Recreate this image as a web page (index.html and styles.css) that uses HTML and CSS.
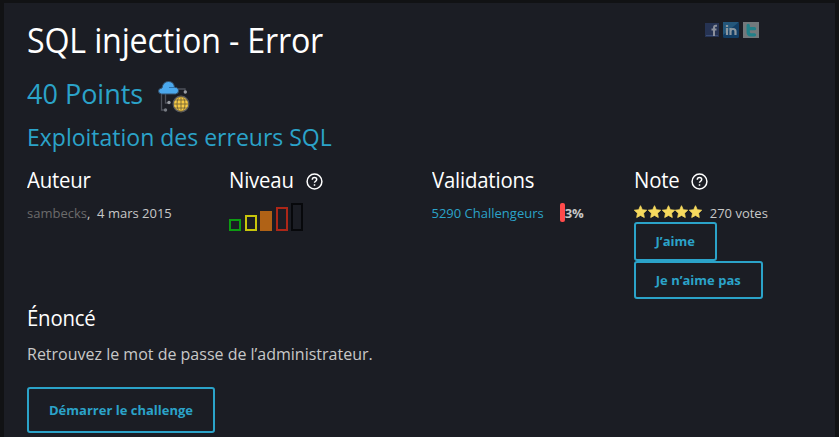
FILE: index.html
```
<!DOCTYPE html>
<html lang="fr">
<head>
<meta charset="utf-8">
<title>SQL injection - Error</title>
<link rel="stylesheet" href="styles.css">
</head>
<body>
<main class="tile">
  <header class="top">
    <h1><span class="narrow narrow-title">SQL injection - Error</span></h1>
    <div class="social">
      <svg width="14" height="14" viewBox="0 0 14 14"><rect width="14" height="14" fill="#263353"/><path d="M1 12.5h12" stroke="#3b4d75"/><path d="M12 2.800h-1.200Q9 2.800 9 5v8M6.500 6.500h5" fill="none" stroke="#8c909b" stroke-width="2"/></svg>
      <svg width="16" height="16" viewBox="0 0 16 16"><rect width="16" height="16" rx="1.500" fill="#123e65"/><path d="M0 0h16L0 13z" fill="#24577b"/><path d="M4 6v7M4 3v2M7.500 13V6M7.500 9.500q0-2.500 2.500-2.500t2.500 2.500V13" fill="none" stroke="#8b979f" stroke-width="2.200"/></svg>
      <svg width="16" height="16" viewBox="0 0 16 16"><rect width="16" height="16" fill="#72797c"/><path d="M5.200 3.500v6.500q0 2.800 2.500 2.800H11.500M5.200 6.700h6.300" fill="none" stroke="#218089" stroke-width="3.300" stroke-linecap="round"/></svg>
    </div>
  </header>
  <h2 class="points">40 Points
    <svg class="category" width="34" height="34" viewBox="0 0 34 34">
      <path d="M4.500 14v16h3M8.500 14v9h3M20 9h8v2" fill="none" stroke="#4d5059" stroke-width="1.300"/>
      <circle cx="8.500" cy="30" r="1.700" fill="#777b83"/><circle cx="12" cy="22.500" r="1.700" fill="#999ca2"/><circle cx="28.300" cy="12" r="1.700" fill="#999ca2"/>
      <path d="M4.500 14q-3-.5-3-3 0-2.500 3.500-3Q6 1.500 11.500 1.500q5.500 0 6 6 4-.5 4 3.500 0 2.500-3 3z" fill="#4ba8ed" stroke="#36526e"/>
      <path d="M12 7.500h6" stroke="#2c70aa"/>
      <circle cx="24" cy="24" r="7.800" fill="#f6c945" stroke="#555861" stroke-width="1.300"/>
      <path d="M24 16v16M16 24h16M17.500 20h13M17.500 28h13" stroke="#6b5d35" stroke-width=".8"/><ellipse cx="24" cy="24" rx="4" ry="7.800" fill="none" stroke="#6b5d35" stroke-width=".8"/>
    </svg>
  </h2>
  <h3 class="subtitle">Exploitation des erreurs SQL</h3>
  <section class="facts">
    <div class="fact">
      <h4><span class="narrow">Auteur</span></h4>
      <p class="detail"><span class="author">sambecks</span>,&nbsp; 4 mars 2015</p>
    </div>
    <div class="fact">
      <h4><span class="narrow">Niveau</span>
        <svg class="help" width="17" height="17" viewBox="0 0 17 17"><circle cx="8.500" cy="8.500" r="7.400"/><path d="M6.300 6.800q0-2.200 2.200-2.200t2.200 2q0 1.100-1.200 1.700-1 .5-1 1.500M8.500 11.300v1.500"/></svg></h4>
      <div class="level"><i class="bar easy"></i><i class="bar low"></i><i class="bar medium"></i><i class="bar hard"></i><i class="bar expert"></i></div>
    </div>
    <div class="fact">
      <h4><span class="narrow">Validations</span></h4>
      <p class="detail validation"><a>5290 Challengeurs</a><i class="meter"></i><b>3%</b></p>
    </div>
    <div class="fact">
      <h4><span class="narrow">Note</span>
        <svg class="help" width="17" height="17" viewBox="0 0 17 17"><circle cx="8.500" cy="8.500" r="7.400"/><path d="M6.300 6.800q0-2.200 2.200-2.200t2.200 2q0 1.100-1.200 1.700-1 .5-1 1.500M8.500 11.300v1.500"/></svg></h4>
      <p class="detail rating">
        <svg class="stars" width="69" height="14" viewBox="0 0 69 14"><defs><path id="star" d="M6.500.7 8.300 4.700 12.700 5.200 9.500 8.200 10.300 12.500 6.500 10.400 2.700 12.500 3.500 8.200.3 5.200 4.700 4.700z"/></defs><use href="#star"/><use href="#star" x="14"/><use href="#star" x="28"/><use href="#star" x="41"/><use href="#star" x="55"/></svg>
        <span>270 votes</span></p>
      <button class="button like">J’aime</button>
      <button class="button dislike">Je n’aime pas</button>
    </div>
  </section>
  <section class="statement">
    <h4><span class="narrow">Énoncé</span></h4>
    <p>Retrouvez le mot de passe de l’administrateur.</p>
    <button class="button start">Démarrer le challenge</button>
  </section>
</main>
</body>
</html>
```
FILE: styles.css
```
* { box-sizing: border-box; }
body {
  margin: 0;
  padding: 3px 4px 0;
  height: 437px;
  overflow: hidden;
  background: #111214;
  color: #c8c8c8;
  font-family: "Open Sans", "Noto Sans", sans-serif;
  font-size: 13px;
}
.tile { height: 434px; padding: 13px 0 0 23px; background: #1b1d24; }
h1, h2, h3, h4, p { margin: 0; font-weight: 400; }
h1, h4 { color: #fff; }
.narrow { display: inline-block; transform: scaleX(.97); transform-origin: left center; letter-spacing: -0.2px; }
.top { display: flex; justify-content: space-between; height: 48px; }
h1 { font-size: 35px; line-height: 48px; white-space: nowrap; }
.narrow-title { transform: scaleX(.92); }
.social { display: flex; align-items: center; gap: 4px; height: 16px; margin: 6px 76px 0 0; }
.points { display: flex; align-items: center; gap: 14px; height: 58px; color: #2ba3c9; font-size: 27px; }
.category { margin-top: 8px; }
.subtitle { height: 32px; line-height: 31px; color: #2ba3c9; font-size: 23px; white-space: nowrap; }
.facts { display: grid; grid-template-columns: repeat(4, 202.25px); height: 138px; margin-top: 12px; }
h4 { display: flex; align-items: center; height: 28px; font-size: 21px; line-height: 28px; gap: 10px; }
.help { fill: none; stroke: #fff; stroke-width: 1.5; margin-top: 2px; }
.detail { display: flex; align-items: center; height: 20px; margin-top: 9px; line-height: 20px; white-space: nowrap; }
.author { color: #6b6b6b; }
.level { display: flex; align-items: flex-end; gap: 3.500px; height: 28px; margin-top: 9px; }
.bar { width: 12px; border: 2px solid; }
.easy { height: 12px; color: #0d9b12; }
.low { height: 16px; color: #c7c50b; }
.medium { height: 20px; color: #b06216; background: currentColor; }
.hard { height: 24px; color: #ad2718; }
.expert { height: 28px; color: #07080b; }
.validation a { color: #2ba3c9; }
.meter { width: 5px; height: 19px; margin: -1px 0 0 16px; border-radius: 2px; background: #ff4b4b; }
.rating { gap: 7px; height: 19px; }
.rating span { padding-top: 1px; }
.stars { fill: #f7da5e; stroke: #f7da5e; stroke-width: .8; stroke-linejoin: round; margin-top: -2px; overflow: visible; }
.button { display: block; border: 2px solid #2ba3c9; border-radius: 3px; background: transparent; color: #2ba3c9; font: 700 13px "Open Sans", sans-serif; padding: 0; }
.like { width: 83px; height: 39px; padding-bottom: 2px; }
.dislike { width: 129px; height: 38px; }
.statement p { margin-top: 8px; font-size: 16px; line-height: 28px; }
.start { width: 188px; height: 46px; margin-top: 19px; }
```
